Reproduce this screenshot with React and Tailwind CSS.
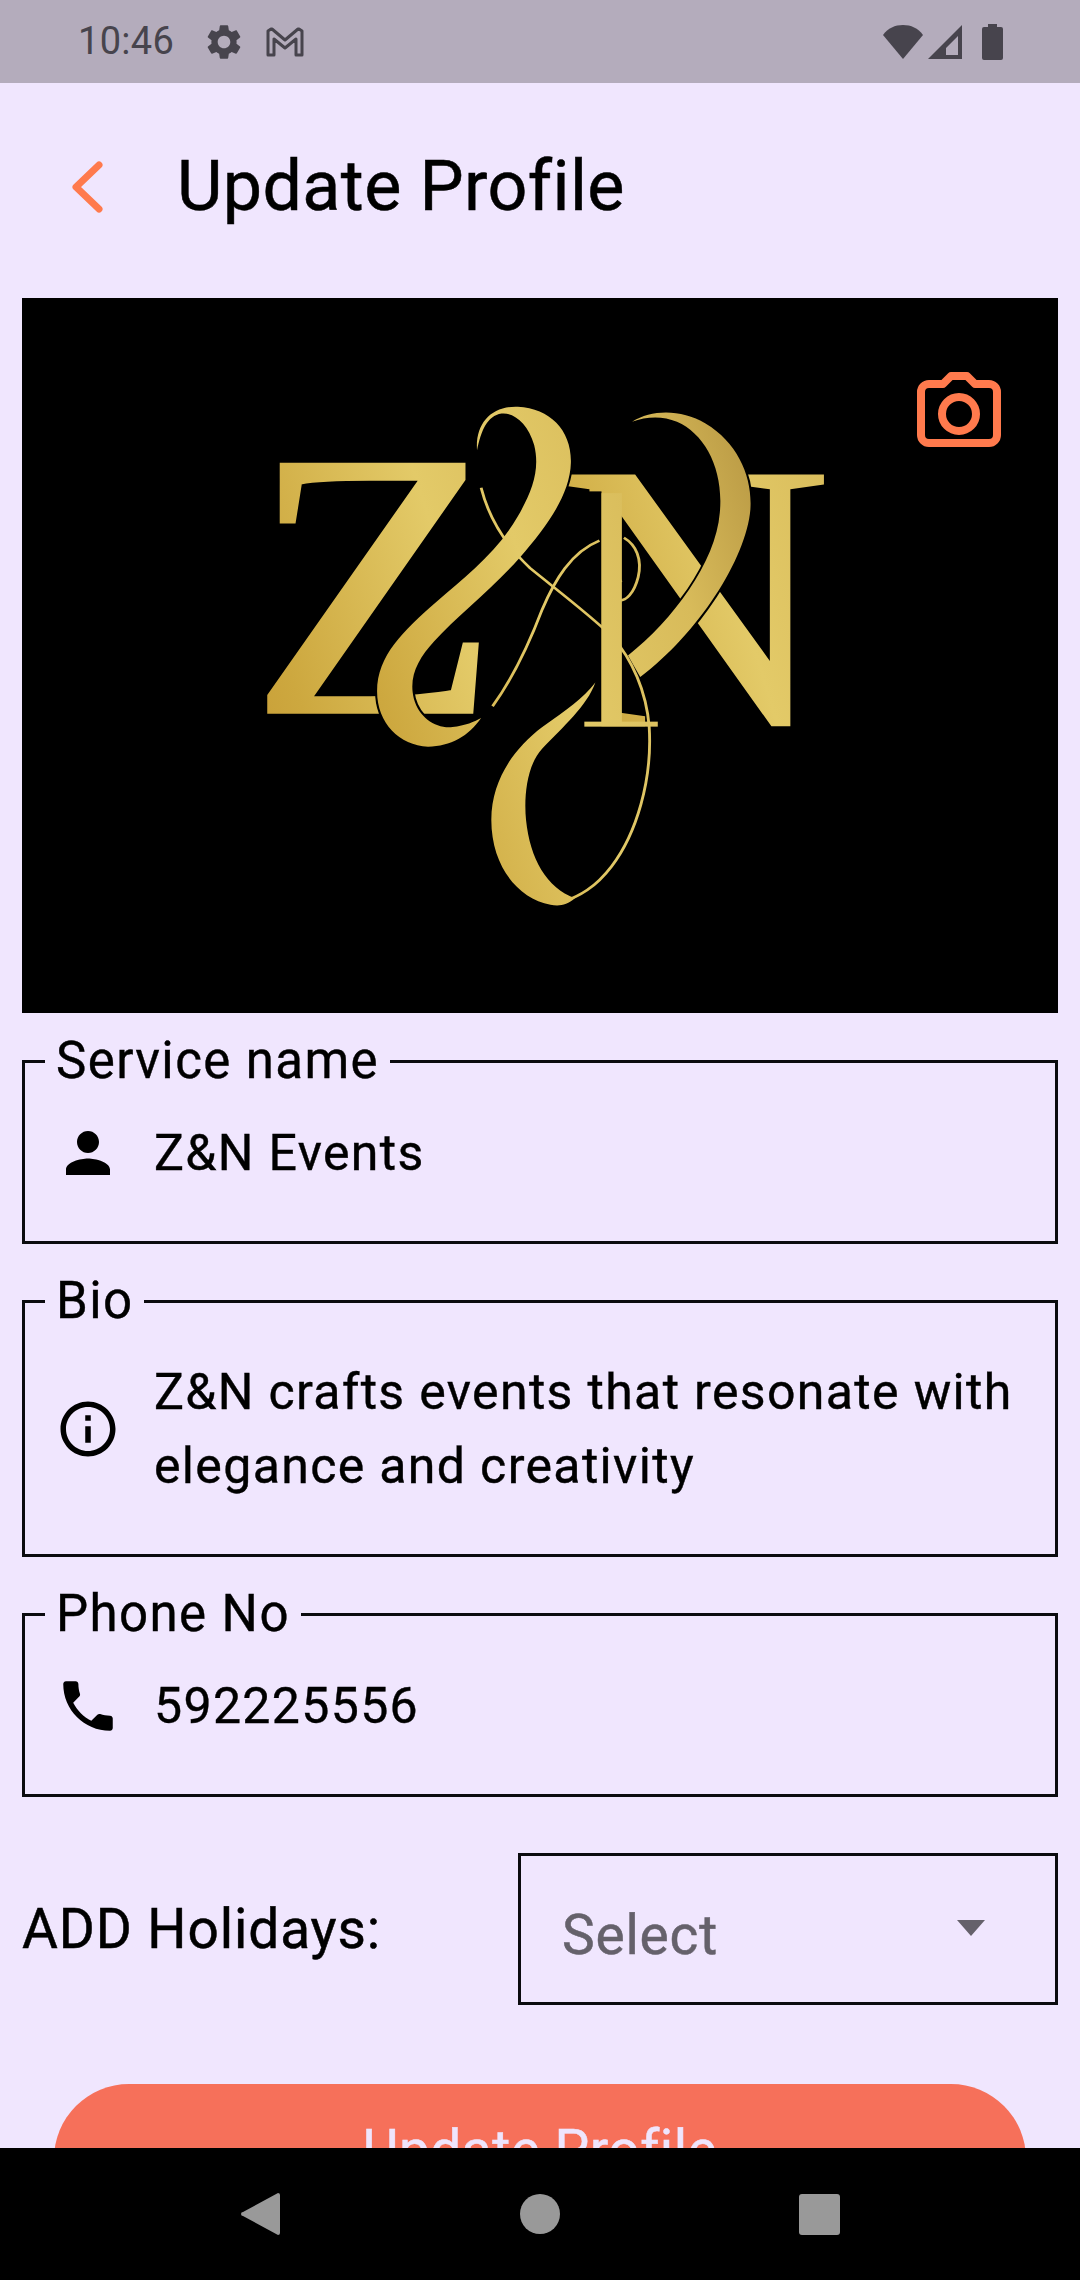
import React from 'react';

const Icon = ({ d, className = 'w-[66px] h-[66px]' }) => (
  <svg className={className} viewBox="0 0 24 24" fill="currentColor"><path d={d} /></svg>
);

const person = 'M12 12c2.21 0 4-1.79 4-4s-1.79-4-4-4-4 1.79-4 4 1.79 4 4 4zm0 2c-2.67 0-8 1.34-8 4v2h16v-2c0-2.66-5.33-4-8-4z';
const info = 'M11 7h2v2h-2zm0 4h2v6h-2zm1-9C6.48 2 2 6.48 2 12s4.48 10 10 10 10-4.48 10-10S17.52 2 12 2zm0 18c-4.41 0-8-3.59-8-8s3.59-8 8-8 8 3.59 8 8-3.59 8-8 8z';
const phone = 'M6.62 10.79c1.44 2.83 3.76 5.14 6.59 6.59l2.2-2.2c.27-.27.67-.36 1.02-.24 1.12.37 2.33.57 3.57.57.55 0 1 .45 1 1V20c0 .55-.45 1-1 1-9.39 0-17-7.61-17-17 0-.55.45-1 1-1h3.5c.55 0 1 .45 1 1 0 1.25.2 2.45.57 3.57.11.35.03.74-.25 1.02l-2.2 2.2z';
const gear = 'M19.14 12.94c.04-.3.06-.61.06-.94 0-.32-.02-.64-.07-.94l2.03-1.58c.18-.14.23-.41.12-.61l-1.92-3.32c-.12-.22-.37-.29-.59-.22l-2.39.96c-.5-.38-1.03-.7-1.62-.94l-.36-2.54c-.04-.24-.24-.41-.48-.41h-3.84c-.24 0-.43.17-.47.41l-.36 2.54c-.59.24-1.13.57-1.62.94l-2.39-.96c-.22-.08-.47 0-.59.22L2.74 8.87c-.12.21-.08.47.12.61l2.03 1.58c-.05.3-.09.63-.09.94s.02.64.07.94l-2.03 1.58c-.18.14-.23.41-.12.61l1.92 3.32c.12.22.37.29.59.22l2.39-.96c.5.38 1.03.7 1.62.94l.36 2.54c.05.24.24.41.48.41h3.84c.24 0 .44-.17.47-.41l.36-2.54c.59-.24 1.13-.56 1.62-.94l2.39.96c.22.08.47 0 .59-.22l1.92-3.32c.12-.22.07-.47-.12-.61l-2.01-1.58zM12 15.6c-1.98 0-3.6-1.62-3.6-3.6s1.62-3.6 3.6-3.6 3.6 1.62 3.6 3.6-1.62 3.6-3.6 3.6z';

const Field = ({ label, icon, children, contentClass }) => (
  <fieldset className="border-[3px] border-[#0b0b0f] mx-[22px] pl-[30px] pr-[20px] font-['Roboto',sans-serif] text-black [-webkit-text-stroke:0.4px]">
    <legend className="ml-[-10px] px-[11px] text-[51px] leading-[56px] tracking-[1.4px]">{label}</legend>
    <div className={`flex items-center gap-[33px] ${contentClass}`}>
      <Icon d={icon} />
      <div className="text-[50px] leading-[74px] tracking-[1.35px]">{children}</div>
    </div>
  </fieldset>
);

const Logo = () => (
  <svg className="w-full h-full" viewBox="0 0 1036 715">
    <defs>
      <linearGradient id="gold" gradientUnits="userSpaceOnUse" x1="90" y1="900" x2="1480" y2="500">
        <stop offset="0" stopColor="#c3952f" />
        <stop offset="0.2" stopColor="#cda83f" />
        <stop offset="0.5" stopColor="#e3ca68" />
        <stop offset="0.75" stopColor="#d8bb5a" />
        <stop offset="1" stopColor="#b08f3d" />
      </linearGradient>
    </defs>
    <g transform="translate(198 72) scale(0.408 0.357)" fill="url(#gold)">
      <text transform="translate(70 960) scale(1.01 1.065)" fontFamily="'Liberation Serif',serif" fontSize="1000" stroke="url(#gold)" strokeWidth="5">Z</text>
      <text transform="translate(795 998) scale(0.98 1.077)" fontFamily="'Liberation Serif',serif" fontSize="1000">N</text>
      <rect x="830" y="340" width="105" height="665" fill="#000" />
      <rect x="935" y="345" width="50" height="645" />
      <rect x="893" y="985" width="180" height="14" />
      <path d="M630 225 C625 150 665 100 730 103 C810 108 862 170 860 260 C858 350 800 440 735 525 C670 610 580 690 525 760 C485 810 462 860 475 920 C488 975 530 1005 570 1000 C600 997 625 985 640 975 C610 1025 565 1055 510 1055 C440 1052 385 990 385 900 C385 800 450 730 530 650 C600 580 680 510 730 410 C765 340 785 280 770 210 C755 150 720 118 690 122 C655 128 640 170 630 225 Z" stroke="#000" strokeWidth="10" paintOrder="stroke" />
      <path d="M1010 145 C1060 110 1130 110 1190 150 C1270 205 1305 300 1300 390 C1290 530 1170 740 1030 860 L1000 800 C1110 700 1215 540 1225 400 C1235 280 1190 180 1120 145 C1085 128 1045 130 1010 145 Z" stroke="#000" strokeWidth="10" paintOrder="stroke" />
      <path d="M920 875 C900 940 840 1000 790 1060 C750 1110 745 1200 750 1260 C760 1370 800 1450 870 1480 C850 1500 830 1503 810 1498 C730 1480 665 1390 665 1260 C665 1150 720 1060 790 1000 C850 950 890 920 920 875 Z" stroke="#000" strokeWidth="8" paintOrder="stroke" />
      <g fill="none" stroke="url(#gold)" strokeWidth="7">
        <path d="M640 330 C660 420 700 490 760 555 C830 620 900 680 960 745 C1010 810 1045 900 1052 1000 C1060 1150 1020 1300 960 1390 C920 1450 880 1475 840 1490" />
        <path d="M930 478 C860 510 820 590 790 670 C760 760 720 860 668 942" />
        <path d="M990 470 C1020 490 1035 530 1025 580 C1015 625 995 650 975 645 C955 640 955 600 985 590" />
      </g>
    </g>
  </svg>
);

export default function App() {
  return (
    <div className="w-[1080px] h-[2280px] overflow-hidden relative bg-[#f0e6fe] font-['Roboto',sans-serif]">
      {/* status bar */}
      <div className="h-[83px] bg-[#b4acbc] flex items-center justify-between pl-[78px] pr-[77px] text-[#47444d]">
        <div className="flex items-center">
          <span className="text-[38px] tracking-[0.3px]">10:46</span>
          <Icon d={gear} className="w-[42px] h-[42px] ml-[29px]" />
          <svg className="w-[38px] h-[30px] ml-[21px]" viewBox="0 0 38 30" fill="none" stroke="currentColor" strokeWidth="3" strokeLinejoin="round"><path d="M2 28V4l3-2h1l13 11L32 2h1l3 2v24h-6V12L19 21 8 12v16z" /></svg>
        </div>
        <div className="flex items-center">
          <svg className="w-[40px] h-[34px]" viewBox="0 0 40 34" fill="currentColor"><path d="M20 34L0 10C5 3 12 0 20 0s15 3 20 10z" /></svg>
          <svg className="w-[34px] h-[34px] ml-[5px]" viewBox="0 0 34 34" fill="currentColor"><path fillRule="evenodd" d="M34 0v34H0zM30 11L18 23v7h12z" /></svg>
          <svg className="w-[21px] h-[36px] ml-[20px]" viewBox="0 0 21 36" fill="currentColor"><path d="M6 0h9v3h4a2 2 0 0 1 2 2v29a2 2 0 0 1-2 2H2a2 2 0 0 1-2-2V5a2 2 0 0 1 2-2h4z" /></svg>
        </div>
      </div>

      {/* header */}
      <div className="h-[215px] pb-[7px] flex items-center">
        <svg className="ml-[70px] w-[36px] h-[56px]" viewBox="0 0 36 56" fill="none" stroke="#ff7a4d" strokeWidth="7" strokeLinecap="round" strokeLinejoin="round"><path d="M29 6L6 28l23 22" /></svg>
        <h1 className="ml-[71px] mb-[2px] text-[70px] font-normal tracking-[0.4px] leading-none text-black [-webkit-text-stroke:0.5px]">Update Profile</h1>
      </div>

      {/* profile image */}
      <div className="mx-[22px] h-[715px] bg-black relative">
        <Logo />
        <svg className="absolute left-[895px] top-[74px] w-[84px] h-[75px]" viewBox="0 0 84 75" fill="none" stroke="#ff7a4d" strokeWidth="8" strokeLinejoin="round"><path d="M4 20a8 8 0 0 1 8-8h14l8-8h16l8 8h14a8 8 0 0 1 8 8v43a8 8 0 0 1-8 8H12a8 8 0 0 1-8-8z" /><circle cx="42" cy="42" r="17" /></svg>
      </div>

      <div className="mt-[20px] flex flex-col gap-[29px]">
        <Field label="Service name" icon={person} contentClass="h-[152px] pb-[24px]">Z&amp;N Events</Field>
        <Field label="Bio" icon={info} contentClass="h-[225px] pb-[26px]">Z&amp;N crafts events that resonate with<br />elegance and creativity</Field>
        <Field label="Phone No" icon={phone} contentClass="h-[152px] pb-[24px]">592225556</Field>
      </div>

      {/* holidays */}
      <div className="mt-[56px] mx-[22px] flex items-center justify-between">
        <span className="text-[55px] tracking-[0.9px] text-black [-webkit-text-stroke:0.5px]">ADD Holidays:</span>
        <div className="w-[540px] h-[152px] border-[3px] border-[#0b0b0f] pl-[41px] pr-[70px] flex items-center justify-between">
          <span className="text-[55px] tracking-[0.8px] pt-[12px] text-[#65616b] [-webkit-text-stroke:0.5px]">Select</span>
          <svg className="w-[28px] h-[16px] mb-[2px]" viewBox="0 0 28 16" fill="#65616b"><path d="M0 0h28L14 16z" /></svg>
        </div>
      </div>

      {/* button, cut off by the nav bar */}
      <div className="mt-[79px] mx-[54px] h-[150px] rounded-[75px] bg-[#f6705a] flex justify-center pt-[36px]">
        <span className="text-[55px] tracking-[0.5px] leading-[60px] text-[#efe5fd] [-webkit-text-stroke:0.5px]">Update Profile</span>
      </div>

      {/* nav bar */}
      <div className="absolute left-0 right-0 bottom-0 h-[132px] bg-black flex items-center justify-center gap-[239px]">
        <svg className="w-[40px] h-[44px]" viewBox="0 0 40 44" fill="#999"><path d="M2 20L37 1a2 2 0 0 1 2 2v38a2 2 0 0 1-2 2L2 24a2 2 0 0 1 0-4z" /></svg>
        <div className="w-[40px] h-[40px] rounded-full bg-[#999]"></div>
        <div className="w-[41px] h-[41px] rounded-[3px] bg-[#999]"></div>
      </div>
    </div>
  );
}
